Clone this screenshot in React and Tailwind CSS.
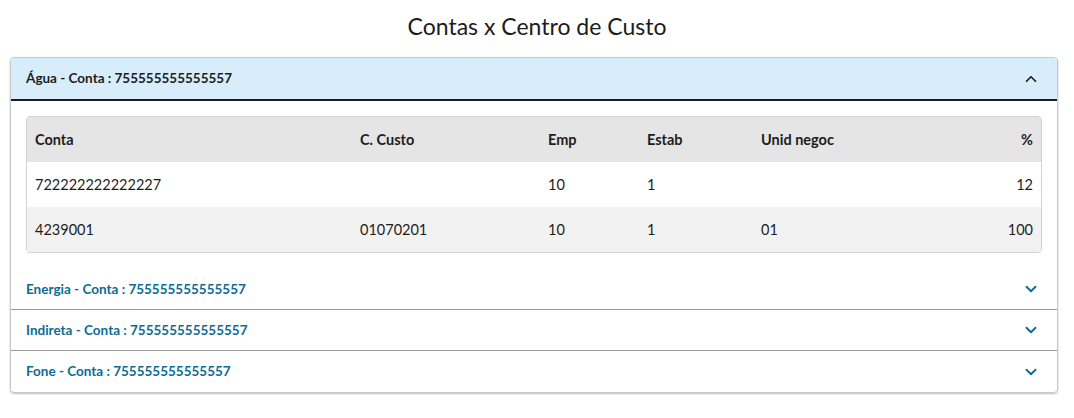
import React from 'react';
import { ChevronUp, ChevronDown } from 'lucide-react';

const rows = [
  { conta: '722222222222227', custo: '', emp: '10', estab: '1', unid: '', pct: '12' },
  { conta: '4239001', custo: '01070201', emp: '10', estab: '1', unid: '01', pct: '100' },
];

const closed = ['Energia', 'Indireta', 'Fone'];

export default function App() {
  return (
    <div className="min-h-[418px] bg-white text-[#1d1d1d]" style={{ fontFamily: 'Lato, "Noto Sans", sans-serif' }}>
      <h1 className="pt-[11px] pb-[16px] text-center text-[23px] leading-[30px] text-[#1c1c1c]">Contas x Centro de Custo</h1>

      <div className="ml-[10px] w-[1048px] rounded-[4px] border border-[#c8c8c8] shadow-[0_1px_2px_rgba(0,0,0,0.25)] overflow-hidden">
        {/* open item */}
        <div className="flex h-[43px] items-center justify-between bg-[#d7edfb] pl-[15px] pr-[17px] border-b-2 border-[#1d1d1d]">
          <span className="text-[13.5px] font-bold text-[#1d1d1d]">Água - Conta : 755555555555557</span>
          <ChevronUp size={18} strokeWidth={2.25} className="text-[#1d1d1d]" />
        </div>
        <div className="px-[15px] pt-[15px] pb-[16px]">
          <div className="rounded-[4px] border border-[#d2d2d2] overflow-hidden">
            <table className="w-full text-left text-[14.5px]">
              <thead className="bg-[#e5e5e5]">
                <tr className="h-[45px]">
                  <th className="w-[333px] pl-[8px] font-bold">Conta</th>
                  <th className="w-[188px] font-bold">C. Custo</th>
                  <th className="w-[99px] font-bold">Emp</th>
                  <th className="w-[114px] font-bold">Estab</th>
                  <th className="font-bold">Unid negoc</th>
                  <th className="pr-[8px] text-right font-bold">%</th>
                </tr>
              </thead>
              <tbody>
                {rows.map((r, i) => (
                  <tr key={i} className={`h-[45px] ${i % 2 ? 'bg-[#f2f2f2]' : 'bg-white'}`}>
                    <td className="pl-[8px]">{r.conta}</td>
                    <td>{r.custo}</td>
                    <td>{r.emp}</td>
                    <td>{r.estab}</td>
                    <td>{r.unid}</td>
                    <td className="pr-[8px] text-right">{r.pct}</td>
                  </tr>
                ))}
              </tbody>
            </table>
          </div>
        </div>

        {/* closed items */}
        {closed.map((name, i) => (
          <div
            key={name}
            className={`flex h-[41px] items-center justify-between pl-[15px] pr-[17px] ${i < closed.length - 1 ? 'border-b border-[#999999]' : ''}`}
          >
            <span className="text-[13.5px] font-bold text-[#0c6c94]">{name} - Conta : 755555555555557</span>
            <ChevronDown size={18} strokeWidth={2.5} className="text-[#0c6c94]" />
          </div>
        ))}
      </div>
    </div>
  );
}
